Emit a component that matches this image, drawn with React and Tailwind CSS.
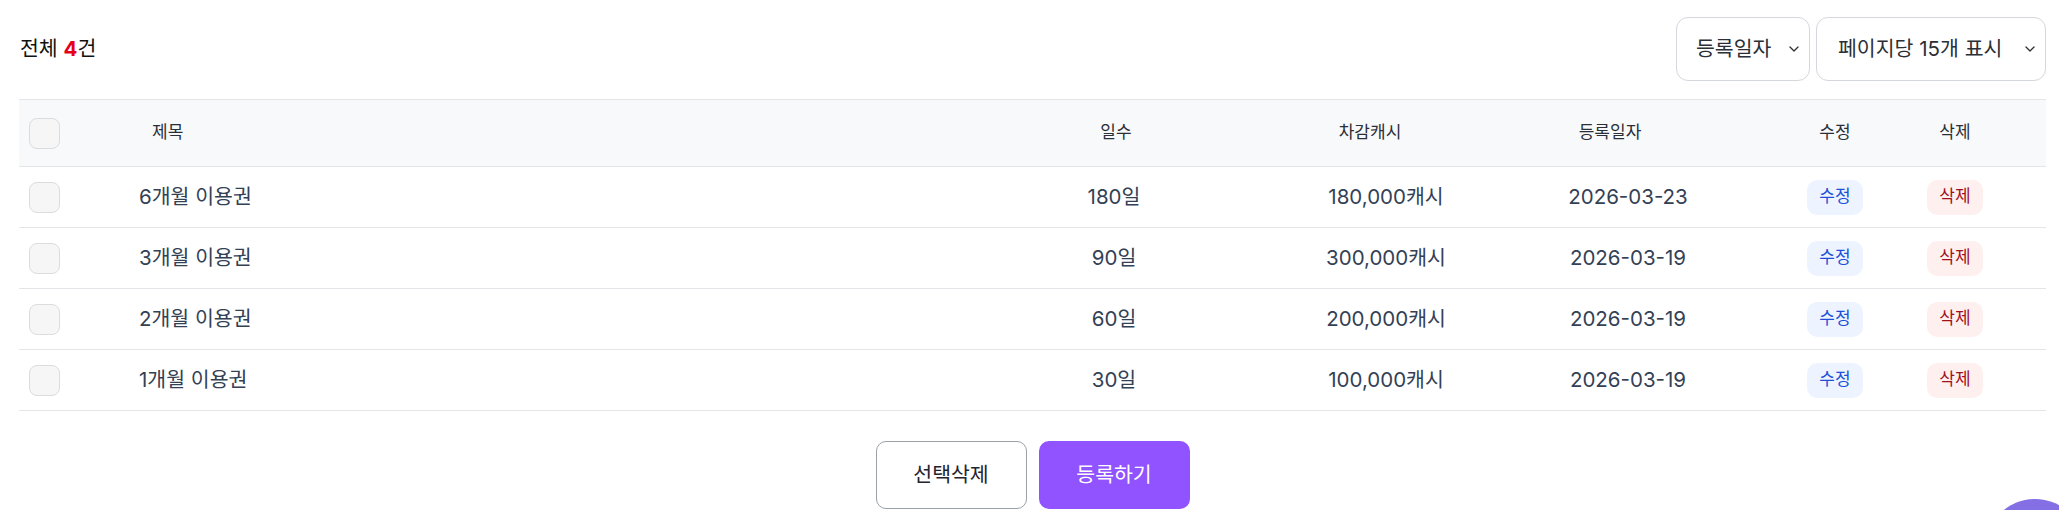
import { ChevronDown } from 'lucide-react';

const rows = [
  { id: 1, title: '6개월 이용권', days: '180일', cash: '180,000캐시', date: '2026-03-23' },
  { id: 2, title: '3개월 이용권', days: '90일', cash: '300,000캐시', date: '2026-03-19' },
  { id: 3, title: '2개월 이용권', days: '60일', cash: '200,000캐시', date: '2026-03-19' },
  { id: 4, title: '1개월 이용권', days: '30일', cash: '100,000캐시', date: '2026-03-19' },
];

const grid = 'grid grid-cols-[80px_1fr_354px_190px_294px_120px_120px_31px] items-center';

function Checkbox() {
  return <div className="w-[31px] h-[31px] rounded-[8px] border border-[#dcdcdc] bg-[#f6f6f6]"></div>;
}

function SelectBox({ label, width, pl }) {
  return (
    <div className={`flex items-center justify-between h-[64px] border border-[#d4d7dc] rounded-[12px] bg-white ${width} ${pl} pr-[7px]`}>
      <span className="text-[20.5px] text-[#2b2f36]">{label}</span>
      <ChevronDown size={16} strokeWidth={2} className="text-[#333]" />
    </div>
  );
}

export default function App() {
  return (
    <div className="relative w-full h-[510px] overflow-hidden bg-white font-['Inter','Noto_Sans_CJK_KR',sans-serif]">
      <div className="pl-[19px] pr-[13px]">
        <div className="flex items-center justify-between pt-[17px]">
          <div className="pl-[1px] text-[20.5px] text-[#111]">
            전체 <span className="font-bold text-[#e5001a]">4</span>건
          </div>
          <div className="flex gap-[6px]">
            <SelectBox label="등록일자" width="w-[134px]" pl="pl-[19px]" />
            <SelectBox label="페이지당 15개 표시" width="w-[230px]" pl="pl-[21px]" />
          </div>
        </div>

        <div className="mt-[18px]">
          <div className={`${grid} h-[68px] bg-[#f8f9fb] border-y border-[#e3e5e8] text-[17px] text-[#2a2f37]`}>
            <div className="pl-[10px]"><Checkbox /></div>
            <div className="pl-[53px]">제목</div>
            <div className="text-center pl-[4px]">일수</div>
            <div className="text-center pr-[32px]">차감캐시</div>
            <div className="text-center pr-[36px]">등록일자</div>
            <div className="text-center">수정</div>
            <div className="text-center">삭제</div>
            <div></div>
          </div>
          {rows.map(r => (
            <div key={r.id} className={`${grid} h-[61px] border-b border-[#e3e5e8] text-[20.5px] text-[#334155]`}>
              <div className="pl-[10px]"><Checkbox /></div>
              <div className="pl-[40px]">{r.title}</div>
              <div className="text-center">{r.days}</div>
              <div className="text-center">{r.cash}</div>
              <div className="text-center">{r.date}</div>
              <div className="flex justify-center">
                <span className="flex items-center justify-center w-[56px] h-[35px] rounded-[10px] bg-[#edf4ff] text-[17px] text-[#1d4fd8]">수정</span>
              </div>
              <div className="flex justify-center">
                <span className="flex items-center justify-center w-[56px] h-[35px] rounded-[10px] bg-[#fff0f0] text-[17px] text-[#a0101c]">삭제</span>
              </div>
              <div></div>
            </div>
          ))}
        </div>

        <div className="flex justify-center gap-[12px] mt-[30px]">
          <button className="w-[151px] h-[68px] rounded-[10px] border border-[#9aa1ab] bg-white text-[20.5px] text-[#1f2430]">선택삭제</button>
          <button className="w-[151px] h-[68px] rounded-[10px] bg-[#9152ff] text-[20.5px] text-white">등록하기</button>
        </div>
      </div>

      <div className="absolute left-[1985px] top-[499px] w-[100px] h-[100px] rounded-full bg-[#8470e4]"></div>
    </div>
  );
}
